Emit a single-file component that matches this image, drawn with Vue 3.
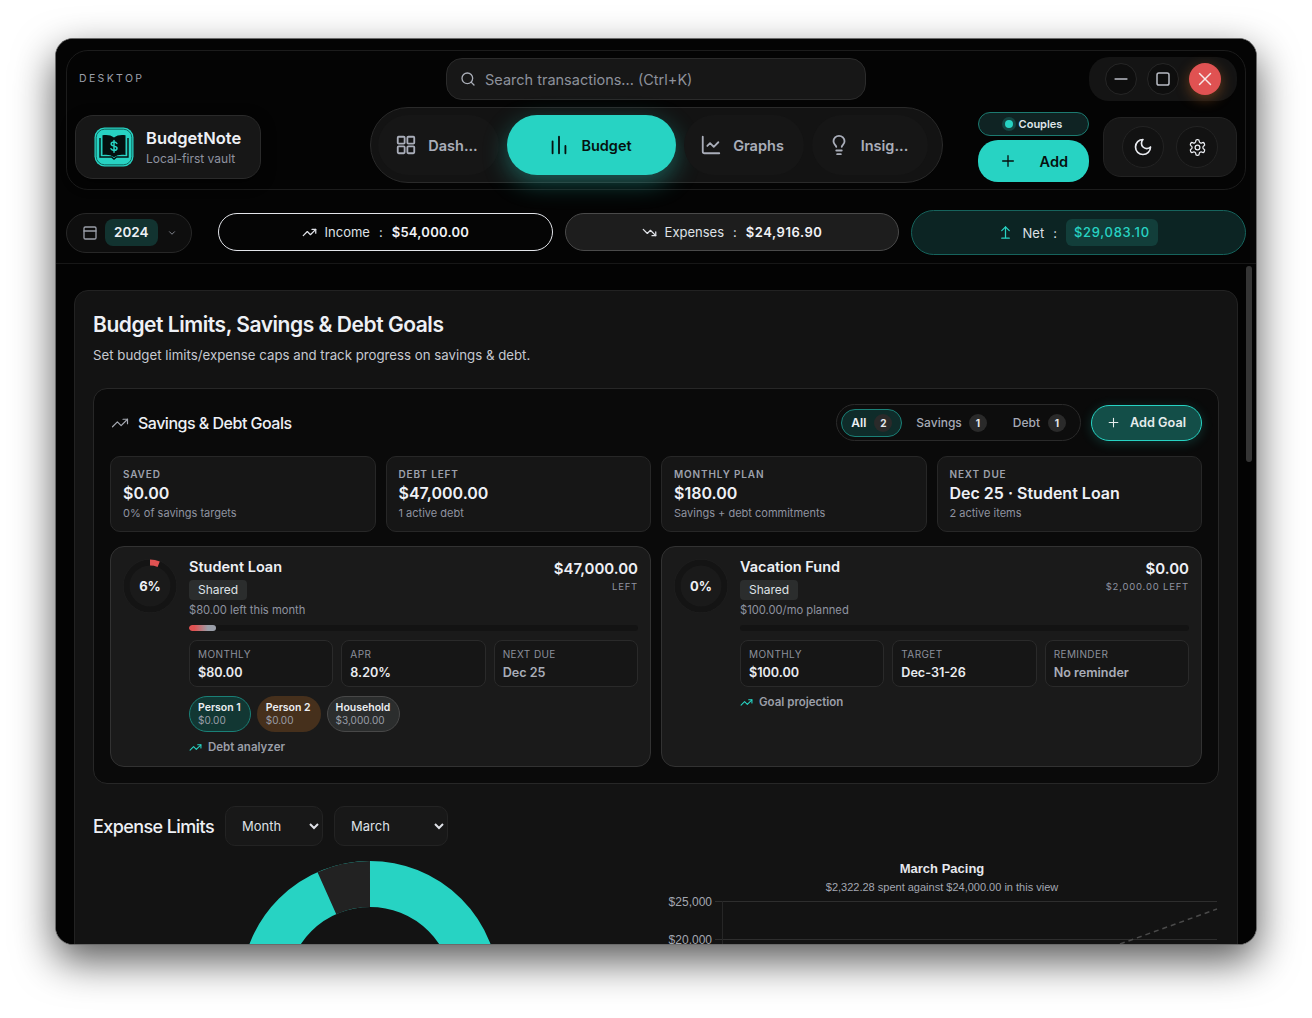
<script setup>
import { ref } from 'vue'

const search = ref('')

const stats = [
  { label: 'SAVED', value: '$0.00', sub: '0% of savings targets' },
  { label: 'DEBT LEFT', value: '$47,000.00', sub: '1 active debt' },
  { label: 'MONTHLY PLAN', value: '$180.00', sub: 'Savings + debt commitments' },
  { label: 'NEXT DUE', value: 'Dec 25 · Student Loan', sub: '2 active items' },
]

const goals = [
  {
    name: 'Student Loan',
    pct: 6,
    amount: '$47,000.00',
    left: 'LEFT',
    note: '$80.00 left this month',
    fill: 27,
    metrics: [
      { label: 'MONTHLY', value: '$80.00' },
      { label: 'APR', value: '8.20%' },
      { label: 'NEXT DUE', value: 'Dec 25', dim: true },
    ],
    people: [
      { name: 'Person 1', value: '$0.00', kind: 'p1' },
      { name: 'Person 2', value: '$0.00', kind: 'p2' },
      { name: 'Household', value: '$3,000.00', kind: 'p3' },
    ],
    link: 'Debt analyzer',
  },
  {
    name: 'Vacation Fund',
    pct: 0,
    amount: '$0.00',
    left: '$2,000.00 LEFT',
    note: '$100.00/mo planned',
    fill: 0,
    metrics: [
      { label: 'MONTHLY', value: '$100.00' },
      { label: 'TARGET', value: 'Dec-31-26' },
      { label: 'REMINDER', value: 'No reminder', dim: true },
    ],
    people: [],
    link: 'Goal projection',
  },
]

// ring circumference for r = 23.5
const ringLen = 2 * Math.PI * 23.5
</script>

<template>
  <div class="page">
    <div class="window">
      <header class="top">
        <div class="panel">
          <div class="row-one">
            <span class="desktop">DESKTOP</span>
            <label class="search">
              <svg class="ico" width="16" height="16" viewBox="0 0 24 24"><circle cx="11" cy="11" r="8" /><path d="m21 21-4.3-4.3" /></svg>
              <input v-model="search" placeholder="Search transactions... (Ctrl+K)" />
            </label>
            <div class="controls">
              <button class="ctl"><svg class="ico" width="20" height="20" viewBox="0 0 24 24"><path d="M5 12h14" /></svg></button>
              <button class="ctl"><svg class="ico" width="18" height="18" viewBox="0 0 24 24"><rect x="4" y="4" width="16" height="16" rx="2.5" /></svg></button>
              <button class="ctl close"><svg class="ico thin" width="22" height="22" viewBox="0 0 24 24"><path d="M18 6 6 18M6 6l12 12" /></svg></button>
            </div>
          </div>

          <div class="row-two">
            <div class="brand">
              <svg class="logo" width="40" height="40" viewBox="0 0 40 40">
                <rect x="0.5" y="0.5" width="39" height="39" rx="10" fill="#27d3c3" />
                <rect x="2.2" y="2.2" width="35.6" height="35.6" rx="8.5" fill="none" stroke="#0d5d56" stroke-width="0.9" />
                <path d="M20 10.5C17 8 12.5 7.5 8.5 8.3v19.8c4-.8 8.500-.3 11.500 2.200 3-2.500 7.500-3 11.500-2.200V8.300C27.500 7.500 23 8 20 10.500Z" fill="#04100f" />
                <path d="M6 11v19h11.500l2.500 2 2.500-2H34V11" fill="none" stroke="#04100f" stroke-width="1.400" />
                <path d="M22.800 16.500c-.5-1-1.500-1.500-2.800-1.500-1.600 0-2.800.8-2.800 2.100 0 2.800 5.800 1.300 5.800 4.100 0 1.300-1.300 2.200-3 2.200-1.300 0-2.500-.5-3-1.600M20 13.400v11.800" fill="none" stroke="#27d3c3" stroke-width="1.500" stroke-linecap="round" />
              </svg>
              <div class="brand-text">
                <div class="brand-name">BudgetNote</div>
                <div class="brand-sub">Local-first vault</div>
              </div>
            </div>

            <nav class="nav">
              <a class="tab">
                <svg class="ico" width="22" height="22" viewBox="0 0 24 24"><rect x="3" y="3" width="7.500" height="7.500" rx="1" /><rect x="13.500" y="3" width="7.500" height="7.500" rx="1" /><rect x="3" y="13.500" width="7.500" height="7.500" rx="1" /><rect x="13.500" y="13.500" width="7.500" height="7.500" rx="1" /></svg>
                Dash...
              </a>
              <a class="tab active">
                <svg class="ico" width="22" height="22" viewBox="0 0 24 24"><path d="M5 21V8M12 21V3M19 21v-8" /></svg>
                Budget
              </a>
              <a class="tab">
                <svg class="ico" width="22" height="22" viewBox="0 0 24 24"><path d="M3 3v16a2 2 0 0 0 2 2h16" /><path d="m20 9-5 5-4-4-3 3" /></svg>
                Graphs
              </a>
              <a class="tab">
                <svg class="ico" width="22" height="22" viewBox="0 0 24 24"><path d="M15 14c.2-1 .7-1.700 1.500-2.500 1-.9 1.500-2.200 1.500-3.500A6 6 0 0 0 6 8c0 1 .2 2.200 1.500 3.500.7.7 1.300 1.500 1.500 2.500" /><path d="M9 18h6" /><path d="M10 22h4" /></svg>
                Insig...
              </a>
            </nav>

            <div class="add-col">
              <div class="couples"><i class="dot"></i>Couples</div>
              <button class="add">
                <svg class="ico" width="16" height="16" viewBox="0 0 24 24"><path d="M12 4v16M4 12h16" /></svg>
                Add
              </button>
            </div>

            <div class="theme">
              <button class="round">
                <svg class="ico" width="20" height="20" viewBox="0 0 24 24"><path d="M12 3a6 6 0 0 0 9 9 9 9 0 1 1-9-9Z" /></svg>
              </button>
              <button class="round">
                <svg class="ico thin" width="19" height="19" viewBox="0 0 24 24"><path d="M12.220 2h-.44a2 2 0 0 0-2 2v.18a2 2 0 0 1-1 1.730l-.43.25a2 2 0 0 1-2 0l-.15-.08a2 2 0 0 0-2.730.73l-.22.38a2 2 0 0 0 .73 2.730l.15.1a2 2 0 0 1 1 1.720v.51a2 2 0 0 1-1 1.740l-.15.09a2 2 0 0 0-.73 2.730l.22.38a2 2 0 0 0 2.730.73l.15-.08a2 2 0 0 1 2 0l.43.25a2 2 0 0 1 1 1.730V20a2 2 0 0 0 2 2h.44a2 2 0 0 0 2-2v-.18a2 2 0 0 1 1-1.730l.43-.25a2 2 0 0 1 2 0l.15.08a2 2 0 0 0 2.730-.73l.22-.39a2 2 0 0 0-.73-2.730l-.15-.08a2 2 0 0 1-1-1.740v-.5a2 2 0 0 1 1-1.740l.15-.09a2 2 0 0 0 .73-2.730l-.22-.38a2 2 0 0 0-2.730-.73l-.15.08a2 2 0 0 1-2 0l-.43-.25a2 2 0 0 1-1-1.730V4a2 2 0 0 0-2-2z" /><circle cx="12" cy="12" r="3" /></svg>
              </button>
            </div>
          </div>
        </div>

        <div class="filters">
          <div class="year">
            <svg class="ico cal" width="16" height="16" viewBox="0 0 24 24"><rect x="3" y="3" width="18" height="18" rx="2" /><path d="M3 9h18" /></svg>
            <span class="year-val">2024</span>
            <svg class="ico chev" width="10" height="10" viewBox="0 0 24 24"><path d="m6 9 6 6 6-6" /></svg>
          </div>
          <div class="sum income">
            <svg class="ico" width="15" height="15" viewBox="0 0 24 24"><path d="m22 7-8.500 8.500-5-5L2 17" /><path d="M16 7h6v6" /></svg>
            <span>Income</span><span class="colon">:</span><b>$54,000.00</b>
          </div>
          <div class="sum expense">
            <svg class="ico" width="15" height="15" viewBox="0 0 24 24"><path d="m22 17-8.500-8.500-5 5L2 7" /><path d="M16 17h6v-6" /></svg>
            <span>Expenses</span><span class="colon">:</span><b>$24,916.90</b>
          </div>
          <div class="sum net">
            <svg class="ico" width="15" height="15" viewBox="0 0 24 24"><path d="M12 3v17" /><path d="m6 9 6-6 6 6" /><path d="M6 21h12" /></svg>
            <span>Net</span><span class="colon">:</span><b class="net-val">$29,083.10</b>
          </div>
        </div>
      </header>

      <main class="content">
        <section class="sheet">
          <h1>Budget Limits, Savings &amp; Debt Goals</h1>
          <p class="lead">Set budget limits/expense caps and track progress on savings &amp; debt.</p>

          <div class="goals">
            <div class="goals-head">
              <svg class="ico head-ico thin" width="18" height="18" viewBox="0 0 24 24"><path d="m22 7-8.500 8.500-5-5L2 17" /><path d="M16 7h6v6" /></svg>
              <h2>Savings &amp; Debt Goals</h2>
              <div class="seg">
                <span class="seg-item on">All <i>2</i></span>
                <span class="seg-item">Savings <i>1</i></span>
                <span class="seg-item">Debt <i>1</i></span>
              </div>
              <button class="add-goal">
                <svg class="ico" width="13" height="13" viewBox="0 0 24 24"><path d="M12 4v16M4 12h16" /></svg>
                Add Goal
              </button>
            </div>

            <div class="stats">
              <div v-for="s in stats" :key="s.label" class="stat">
                <div class="stat-label">{{ s.label }}</div>
                <div class="stat-value">{{ s.value }}</div>
                <div class="stat-sub">{{ s.sub }}</div>
              </div>
            </div>

            <div class="cards">
              <article v-for="g in goals" :key="g.name" class="card">
                <div class="ring">
                  <svg width="54" height="54" viewBox="0 0 54 54">
                    <circle cx="27" cy="27" r="26.500" fill="none" stroke="#222" stroke-width="1" />
                    <circle cx="27" cy="27" r="23.500" fill="none" stroke="#141414" stroke-width="6" />
                    <circle
                      v-if="g.pct"
                      cx="27" cy="27" r="23.500" fill="none" stroke="#e05252" stroke-width="6"
                      transform="rotate(-90 27 27)"
                      :stroke-dasharray="`${(ringLen * g.pct) / 100} ${ringLen}`"
                    />
                  </svg>
                  <span>{{ g.pct }}%</span>
                </div>
                <div class="card-body">
                  <div class="card-top">
                    <div>
                      <div class="card-name">{{ g.name }}</div>
                      <span class="badge">Shared</span>
                      <div class="card-note">{{ g.note }}</div>
                    </div>
                    <div class="card-amount">
                      <div class="amount">{{ g.amount }}</div>
                      <div class="left">{{ g.left }}</div>
                    </div>
                  </div>
                  <div class="track">
                    <div v-if="g.fill" class="fill" :style="{ width: g.fill + 'px' }"></div>
                  </div>
                  <div class="metrics">
                    <div v-for="m in g.metrics" :key="m.label" class="metric">
                      <div class="metric-label">{{ m.label }}</div>
                      <div class="metric-value" :class="{ dim: m.dim }">{{ m.value }}</div>
                    </div>
                  </div>
                  <div v-if="g.people.length" class="people">
                    <div v-for="p in g.people" :key="p.name" class="person" :class="p.kind">
                      <b>{{ p.name }}</b>
                      <span>{{ p.value }}</span>
                    </div>
                  </div>
                  <a class="link">
                    <svg class="ico teal" width="13" height="13" viewBox="0 0 24 24"><path d="m22 7-8.500 8.500-5-5L2 17" /><path d="M16 7h6v6" /></svg>
                    {{ g.link }}
                  </a>
                </div>
              </article>
            </div>
          </div>

          <div class="limits-head">
            <h2>Expense Limits</h2>
            <select class="pick month">
              <option>Month</option>
              <option>Year</option>
            </select>
            <select class="pick march">
              <option>March</option>
              <option>April</option>
            </select>
          </div>

          <div class="charts">
            <svg class="donut" width="554" height="270" viewBox="0 0 554 270">
              <circle cx="277" cy="129" r="106" fill="none" stroke="#27d3c3" stroke-width="46" />
              <path d="M277 23A106 106 0 0 0 233.900 32.200" fill="none" stroke="#222" stroke-width="46" />
            </svg>
            <svg class="pacing" width="569" height="270" viewBox="0 0 569 270">
              <text class="t-title" x="292" y="12" text-anchor="middle">March Pacing</text>
              <text class="t-sub" x="292" y="30" text-anchor="middle">$2,322.28 spent against $24,000.00 in this view</text>
              <text class="t-axis" x="62" y="45" text-anchor="end">$25,000</text>
              <text class="t-axis" x="62" y="83" text-anchor="end">$20,000</text>
              <path d="M65 40.500H567M65 78.500H567" stroke="#2e2e2e" />
              <path d="M72.500 40V120" stroke="#262626" />
              <path d="M470 83 567 48" fill="none" stroke="#4a4a4a" stroke-width="1.500" stroke-dasharray="5 4" />
            </svg>
          </div>
        </section>
        <div class="thumb"></div>
      </main>
    </div>
  </div>
</template>

<style>
html, body { background: #fff; }
</style>

<style scoped>
* { box-sizing: border-box; }

.page {
  height: 1018px;
  padding: 38px 55px 0;
  overflow: hidden;
}

.window {
  position: relative;
  width: 1202px;
  height: 907px;
  overflow: hidden;
  background: #000;
  border: 1px solid #6a6a6a;
  border-radius: 18px;
  box-shadow: 0 16px 40px rgba(0, 0, 0, 0.65);
  font-family: Inter, "Liberation Sans", sans-serif;
  color: #eef0f5;
}

.ico {
  fill: none;
  stroke: currentColor;
  stroke-width: 2;
  stroke-linecap: round;
  stroke-linejoin: round;
  flex: none;
}

.ico.thin { stroke-width: 1.600; }

button {
  font-family: inherit;
  border: 0;
  padding: 0;
  cursor: pointer;
}

.top {
  padding: 11px 10px 8px;
  background: #040404;
  border-bottom: 1px solid #171717;
}

.panel {
  height: 140px;
  border: 1px solid #1c1c1c;
  border-radius: 22px;
  padding-top: 6px;
}

.row-one {
  display: grid;
  grid-template-columns: 1fr 420px 1fr;
  align-items: center;
  height: 44px;
}

.desktop {
  padding-left: 12px;
  font-size: 10.500px;
  letter-spacing: 2.350px;
  color: #9a9faa;
  margin-top: -1px;
}

.search {
  display: flex;
  align-items: center;
  gap: 7px;
  height: 42px;
  padding: 0 13px;
  background: #171717;
  border: 1px solid #2b2b2b;
  border-radius: 16px;
  color: #a9adb7;
}

.search input {
  flex: 1;
  min-width: 0;
  border: 0;
  outline: 0;
  background: none;
  font: 400 14.500px Inter, "Liberation Sans", sans-serif;
  color: #d5d7dd;
}

.search input::placeholder {
  color: #8d919b;
  opacity: 1;
}

.controls {
  justify-self: end;
  display: flex;
  gap: 10px;
  align-items: center;
  height: 44px;
  margin-right: 8px;
  padding: 0 16px;
  background: #141414;
  border-radius: 20px;
}

.ctl {
  display: flex;
  align-items: center;
  justify-content: center;
  width: 32px;
  height: 32px;
  border-radius: 50%;
  background: #0e0e0e;
  border: 1px solid #262626;
  color: #b9bcc5;
}

.ctl.close {
  background: #e05252;
  border: 0;
  color: #f6e8e8;
  box-shadow: 0 4px 14px rgba(226, 120, 40, 0.4);
}

.row-two {
  display: flex;
  align-items: flex-start;
  height: 76px;
  margin-top: 6px;
  padding-left: 8px;
}

.brand {
  display: flex;
  align-items: center;
  gap: 12px;
  width: 186px;
  height: 64px;
  margin-top: 8px;
  padding-left: 18px;
  background: #171717;
  border: 1px solid #2a2a2a;
  border-radius: 18px;
  box-shadow: 0 4px 14px rgba(0, 0, 0, 0.5);
}

.logo { flex: none; }

.brand-text { padding-top: 2px; }

.brand-name {
  font-size: 16.500px;
  font-weight: 600;
  line-height: 20px;
}

.brand-sub {
  margin-top: 1px;
  font-size: 12px;
  line-height: 19px;
  color: #8f93a0;
}

.nav {
  display: grid;
  grid-template-columns: 121px 169px 120px 116px;
  gap: 8px;
  width: 573px;
  height: 76px;
  margin-left: 109px;
  padding: 7px;
  background: #131313;
  border: 1px solid #2a2a2a;
  border-radius: 38px;
}

.tab {
  display: flex;
  align-items: center;
  justify-content: center;
  gap: 11px;
  height: 60px;
  padding-right: 4px;
  border-radius: 30px;
  background: #161616;
  font-size: 14.500px;
  font-weight: 600;
  color: #a9adb9;
}

.tab.active {
  padding-right: 3px;
  background: #27d3c3;
  color: #06110f;
  box-shadow: 0 8px 24px rgba(39, 211, 195, 0.38);
}

.add-col {
  display: flex;
  flex-direction: column;
  gap: 4px;
  width: 111px;
  margin: 5px 0 0 35px;
}

.couples {
  display: flex;
  align-items: center;
  justify-content: center;
  gap: 6px;
  height: 24px;
  padding-bottom: 1px;
  background: #0f2323;
  border: 1px solid #1c7a70;
  border-radius: 12px;
  font-size: 11px;
  font-weight: 600;
  color: #dfe6ea;
}

.dot {
  width: 8px;
  height: 8px;
  border-radius: 50%;
  background: #27d3c3;
  box-shadow: 0 0 0 3px rgba(39, 211, 195, 0.2);
}

.add {
  display: flex;
  align-items: center;
  justify-content: space-between;
  height: 42px;
  padding: 0 21px 0 22px;
  background: #27d3c3;
  border-radius: 20px;
  font-size: 14.500px;
  font-weight: 600;
  color: #06110f;
}

.theme {
  display: flex;
  align-items: center;
  gap: 12px;
  width: 134px;
  height: 60px;
  margin: 10px 0 0 14px;
  padding: 0 18px;
  background: #161616;
  border: 1px solid #222;
  border-radius: 18px;
}

.round {
  display: flex;
  align-items: center;
  justify-content: center;
  width: 42px;
  height: 42px;
  flex: none;
  border-radius: 50%;
  background: #121212;
  border: 1px solid #232323;
  color: #e9ebf0;
}

.filters {
  display: flex;
  align-items: center;
  gap: 12px;
  height: 45px;
  margin-top: 20px;
}

.year {
  display: flex;
  align-items: center;
  width: 126px;
  height: 40px;
  margin-right: 14px;
  padding-left: 15px;
  background: #0e0e0e;
  border: 1px solid #272727;
  border-radius: 20px;
  flex: none;
}

.cal { color: #9a9ea8; }

.year-val {
  margin-left: 7px;
  padding: 0 9px;
  height: 27px;
  line-height: 27px;
  background: #123330;
  border-radius: 8px;
  font-size: 13.500px;
  font-weight: 600;
}

.chev {
  margin-left: 9px;
  color: #9a9ea8;
}

.sum {
  flex: 1;
  display: flex;
  align-items: center;
  justify-content: center;
  gap: 8px;
  height: 38px;
  border-radius: 19px;
  font-size: 13px;
  color: #dfe1e7;
}

.sum b {
  font-weight: 600;
  letter-spacing: 0.250px;
  color: #f1f2f6;
}

.sum .colon { margin: 0 1px; }

.income {
  margin-top: -1px;
  background: #050505;
  border: 1px solid #e3e5ea;
}

.expense {
  margin-top: -1px;
  background: #1d1d1d;
  border: 1px solid #4a4a4a;
}

.expense b { letter-spacing: 0.550px; }

.net {
  height: 45px;
  border-radius: 23px;
  background: #0c2423;
  border: 1px solid #16635c;
}

.net .ico { color: #27d3c3; margin-right: 2px; }

.sum .net-val {
  margin-right: 2px;
  padding: 0 8px;
  height: 27px;
  line-height: 27px;
  background: #123e3a;
  border-radius: 6px;
  color: #27d3c3;
  font-weight: 500;
  letter-spacing: 0.700px;
}

.content {
  position: relative;
  padding: 26px 18px 0;
  background: #030303;
}

.thumb {
  position: absolute;
  top: 2px;
  right: 4px;
  width: 6px;
  height: 196px;
  border-radius: 3px;
  background: #353535;
}

.sheet {
  padding: 19px 18px 0;
  height: 800px;
  background: #131313;
  border: 1px solid #222;
  border-radius: 14px;
}

h1 {
  margin: 1px 0 0;
  font-size: 21px;
  line-height: 28px;
  font-weight: 600;
  letter-spacing: -0.460px;
}

.lead {
  margin: 6px 0 0;
  font-size: 13.250px;
  line-height: 20px;
  color: #c6c9d1;
}

.goals {
  margin-top: 23px;
  padding: 15px 16px 16px;
  background: #0a0a0a;
  border: 1px solid #272727;
  border-radius: 14px;
}

.goals-head {
  display: flex;
  align-items: center;
  height: 37px;
  margin-bottom: 15px;
}

.head-ico {
  margin-left: 1px;
  color: #a6aab3;
}

.goals-head h2 {
  flex: 1;
  margin: 0 0 0 9px;
  font-size: 16px;
  font-weight: 500;
  letter-spacing: -0.500px;
}

.seg {
  display: flex;
  align-items: center;
  gap: 6px;
  height: 37px;
  padding: 0 4px;
  border: 1px solid #2a2a2a;
  border-radius: 19px;
  background: #0d0d0d;
}

.seg-item {
  display: flex;
  align-items: center;
  gap: 7px;
  height: 28px;
  padding: 0 9px;
  border: 1px solid transparent;
  border-radius: 14px;
  font-size: 12px;
  font-weight: 500;
  color: #a6aab6;
}

.seg-item:last-child { gap: 8px; }

.seg-item.on {
  gap: 8px;
  margin-right: -2px;
  background: #0f2c2a;
  border-color: #1a8077;
  color: #eef0f5;
  font-weight: 600;
}

.seg-item i {
  display: flex;
  align-items: center;
  justify-content: center;
  width: 18px;
  height: 18px;
  border-radius: 50%;
  background: #2a2a2a;
  font-size: 10px;
  font-style: normal;
  font-weight: 700;
  color: #e6e8ec;
}

.add-goal {
  display: flex;
  align-items: center;
  justify-content: center;
  gap: 10px;
  width: 111px;
  height: 36px;
  margin-left: 10px;
  background: #134e48;
  border: 1px solid #27d3c3;
  border-radius: 18px;
  font-size: 12.700px;
  font-weight: 600;
  color: #e6ecec;
  box-shadow: 0 2px 12px rgba(39, 211, 195, 0.2);
}

.stats {
  display: grid;
  grid-template-columns: repeat(4, 1fr);
  gap: 10px;
}

.stat {
  height: 76px;
  padding: 11px 12px 0;
  background: #161616;
  border: 1px solid #272727;
  border-radius: 10px;
}

.stat-label {
  font-size: 10px;
  line-height: 12px;
  font-weight: 600;
  letter-spacing: 0.850px;
  color: #9da1ac;
}

.stat-value {
  margin-top: 1px;
  font-size: 16px;
  line-height: 24px;
  font-weight: 600;
}

.stat-sub {
  font-size: 11px;
  line-height: 16px;
  color: #8f93a0;
}

.cards {
  display: grid;
  grid-template-columns: 1fr 1fr;
  gap: 10px;
  margin-top: 14px;
}

.card {
  display: flex;
  gap: 12px;
  height: 221px;
  padding: 11px 12px 0;
  background: #1a1a1a;
  border: 1px solid #323232;
  border-radius: 14px;
}

.ring {
  position: relative;
  width: 54px;
  height: 54px;
  flex: none;
  margin-top: 1px;
}

.ring span {
  position: absolute;
  inset: 0;
  display: flex;
  align-items: center;
  justify-content: center;
  font-size: 13px;
  font-weight: 700;
}

.card-body {
  flex: 1;
  min-width: 0;
}

.card-top {
  display: flex;
  justify-content: space-between;
  height: 60px;
}

.card-name {
  font-size: 14.500px;
  line-height: 18px;
  font-weight: 600;
}

.badge {
  display: inline-block;
  height: 20px;
  margin-top: 4px;
  padding: 0 9px;
  background: #2b2d2d;
  border-radius: 4px;
  font-size: 12px;
  line-height: 20px;
  color: #dfe2e6;
}

.card-note {
  margin-top: 2px;
  font-size: 11.200px;
  line-height: 17px;
  color: #8f93a0;
}

.card-amount {
  text-align: right;
}

.amount {
  margin-top: 1px;
  font-size: 15px;
  line-height: 20px;
  font-weight: 600;
}

.left {
  font-size: 9.500px;
  line-height: 16px;
  letter-spacing: 0.800px;
  color: #8f93a0;
}

.track {
  height: 6px;
  margin-top: 7px;
  background: #131313;
  border-radius: 3px;
  overflow: hidden;
}

.fill {
  height: 100%;
  border-radius: 3px;
  background: linear-gradient(90deg, #e05252 20%, #9a9ea8 70%);
}

.metrics {
  display: grid;
  grid-template-columns: repeat(3, 1fr);
  gap: 8px;
  margin-top: 9px;
}

.metric {
  height: 47px;
  padding: 7px 8px 0;
  background: #161616;
  border: 1px solid #2a2a2a;
  border-radius: 8px;
}

.metric-label {
  font-size: 10px;
  line-height: 12px;
  letter-spacing: 0.400px;
  color: #8c909b;
}

.metric-value {
  margin-top: 4px;
  font-size: 12.600px;
  line-height: 17px;
  font-weight: 600;
  color: #e9ebf0;
}

.metric-value.dim { color: #a9adb8; }

.people {
  display: flex;
  gap: 6px;
  margin-top: 9px;
}

.person {
  display: flex;
  flex-direction: column;
  justify-content: center;
  height: 36px;
  padding: 0 9px 0 8px;
  border: 1px solid transparent;
  border-radius: 18px;
}

.person b {
  font-size: 10.500px;
  line-height: 12px;
  font-weight: 600;
  color: #eceef2;
}

.person span {
  font-size: 10px;
  line-height: 13px;
  color: #9a9ea8;
}

.p1 {
  background: #123733;
  border-color: #1a8077;
}

.p2 {
  background: #46301c;
}

.p3 {
  background: #2b2d2d;
  border-color: #484848;
}

.link {
  display: flex;
  align-items: center;
  gap: 6px;
  height: 14px;
  margin-top: 8px;
  font-size: 11.500px;
  font-weight: 600;
  color: #9a9ea8;
}

.teal { color: #27d3c3; }

.limits-head {
  display: flex;
  align-items: center;
  height: 40px;
  margin-top: 22px;
}

.limits-head h2 {
  margin: 0 11px 0 0;
  font-size: 18px;
  font-weight: 500;
  letter-spacing: -0.600px;
}

.pick {
  height: 40px;
  margin-right: 11px;
  padding: 0 8px 0 12px;
  color-scheme: dark;
  background-color: #181818;
  border: 1px solid #232323;
  border-radius: 10px;
  font: 400 13px Inter, "Liberation Sans", sans-serif;
  color: #dfe1e7;
  outline: 0;
}

.month { width: 98px; }
.march { width: 114px; }

.charts {
  display: flex;
  justify-content: space-between;
  margin-top: 15px;
}

.pacing text {
  font-family: "Liberation Sans", sans-serif;
}

.t-title {
  font-size: 13px;
  font-weight: 700;
  fill: #e6e8ee;
}

.t-sub {
  font-size: 11px;
  fill: #a3a7b1;
}

.t-axis {
  font-size: 12px;
  fill: #a3a7b1;
}
</style>
